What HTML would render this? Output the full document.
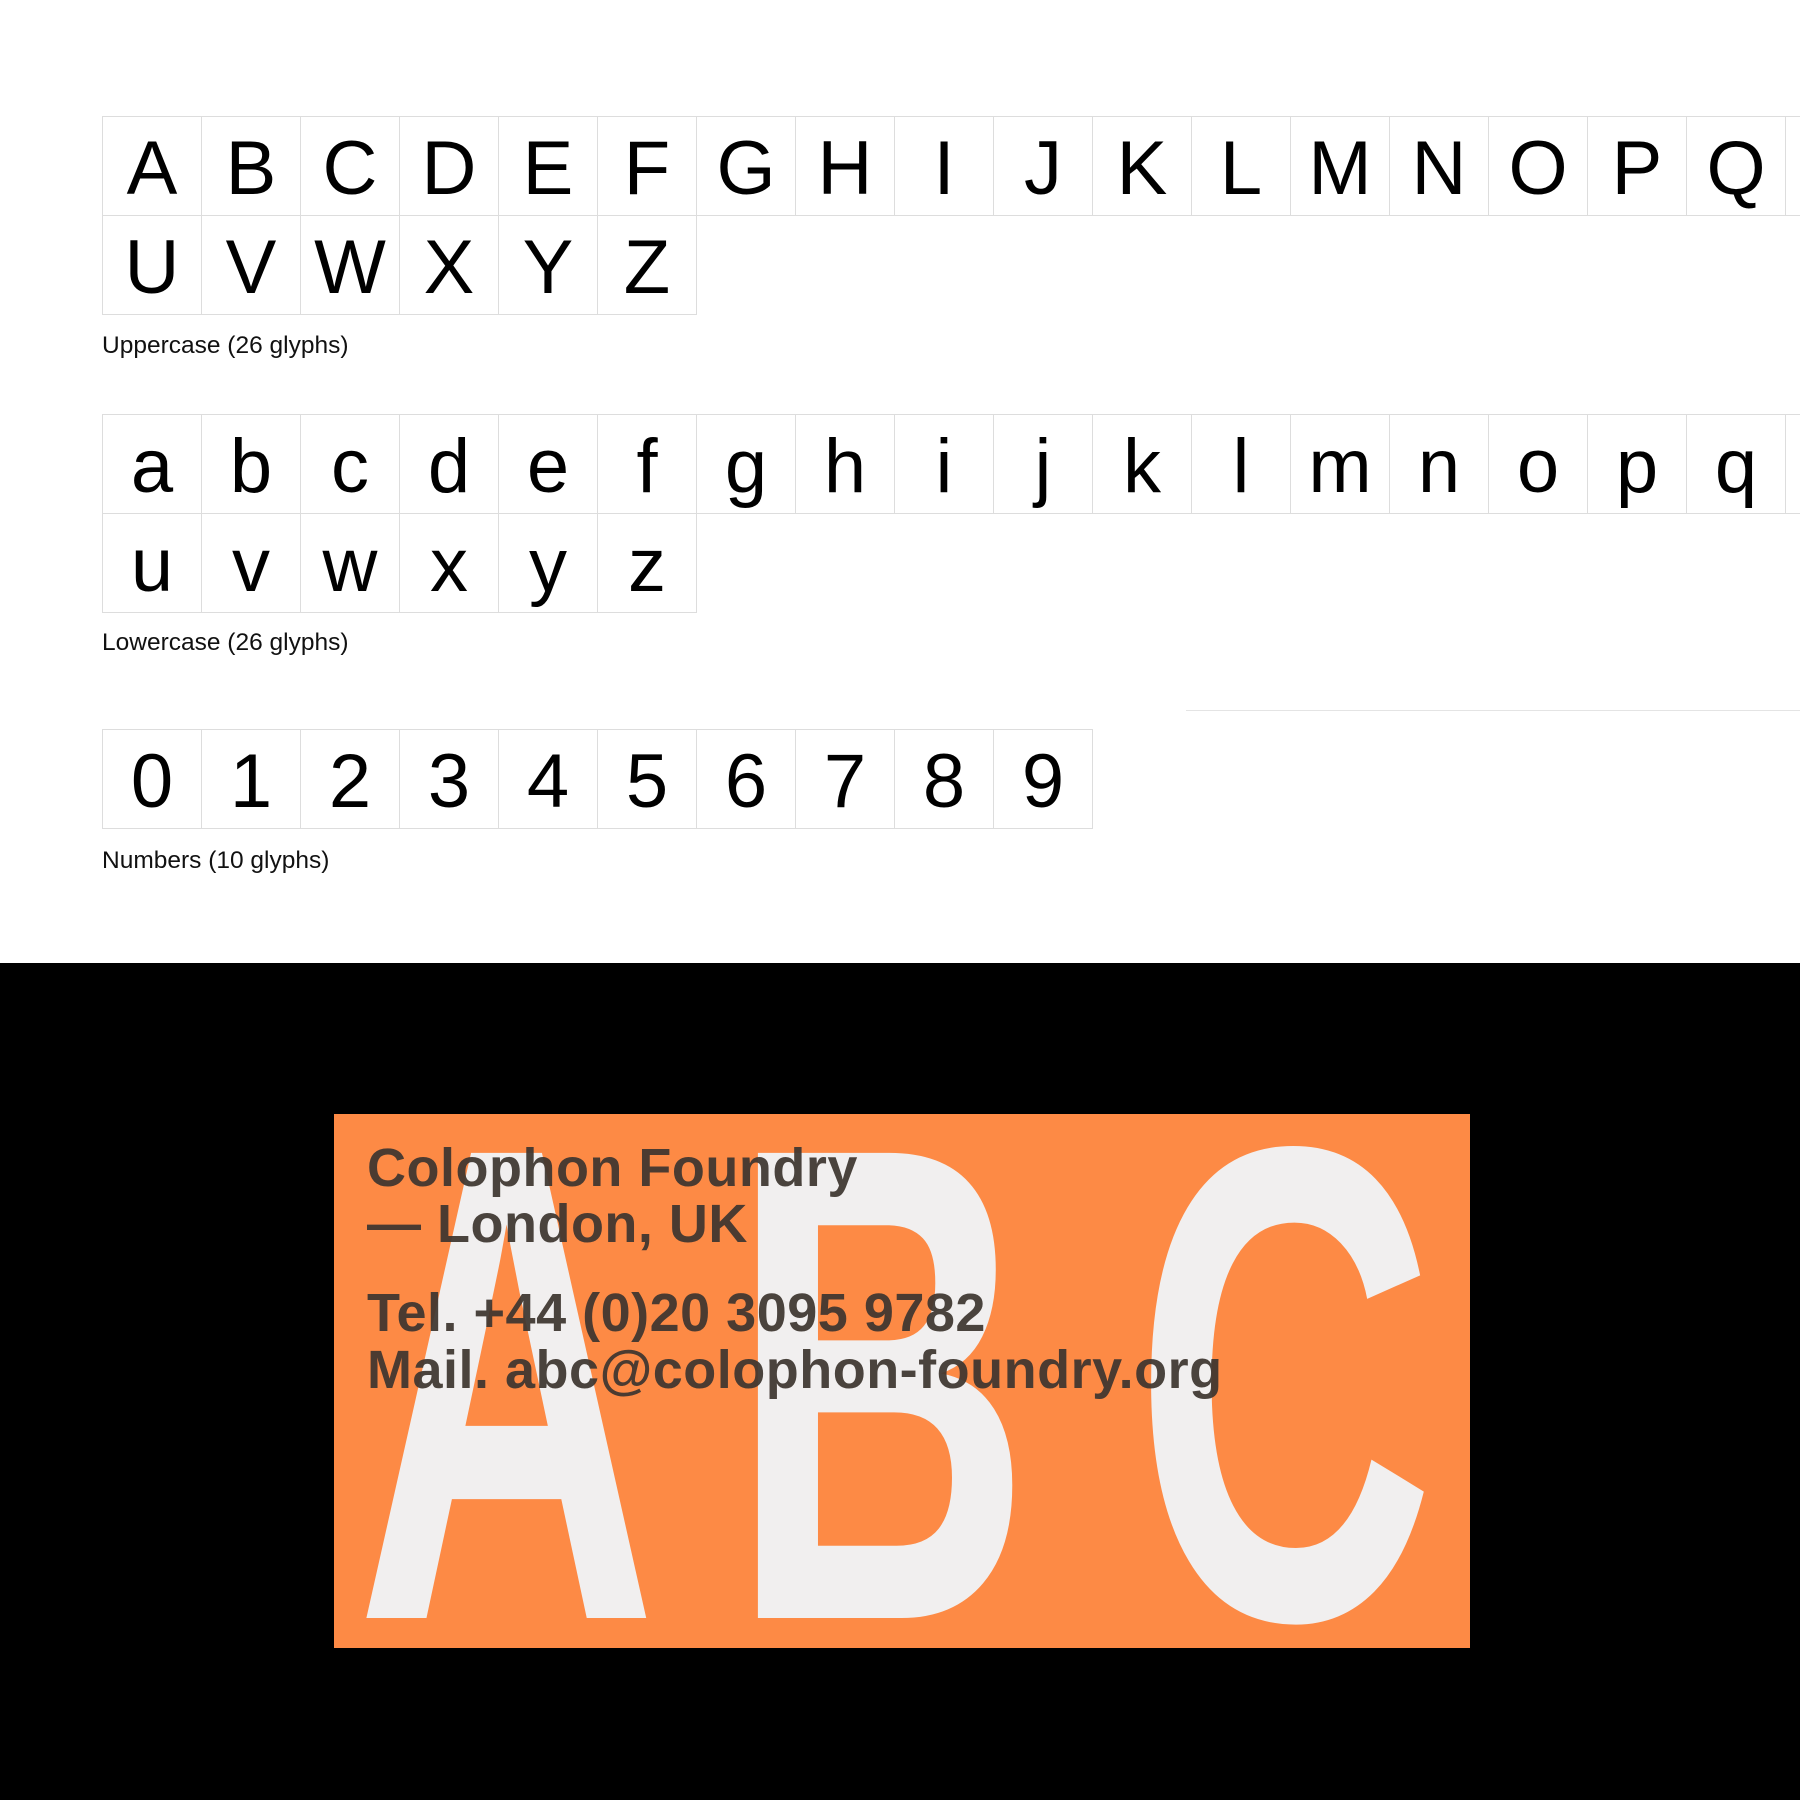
<!DOCTYPE html>
<html><head><meta charset="utf-8"><style>
html,body{margin:0;width:1800px;height:1800px;overflow:hidden}
body{background:#fff;position:relative;font-family:"Liberation Sans",sans-serif}
.wrap{position:absolute;left:0;top:0;width:1800px;height:1800px;overflow:hidden}
.grid{position:absolute;left:102px;display:grid;grid-template-columns:repeat(18,99px);grid-auto-rows:99px;border-left:1px solid #ddd;border-top:1px solid #ddd}
.grid div{border-right:1px solid #ddd;border-bottom:1px solid #ddd;display:flex;align-items:center;justify-content:center;font-size:76px;color:#000;padding-top:4px;box-sizing:border-box}
.grid.n{grid-template-columns:repeat(10,99px)}
.cap{position:absolute;left:102px;font-size:24.5px;color:#111}
.blk{position:absolute;left:0;top:963px;width:1800px;height:837px;background:#000}
.card{position:absolute;left:334px;top:1114px;width:1136px;height:534px;background:#fd8a45;overflow:hidden}
.big{position:absolute;top:-67px;font-weight:bold;font-size:676px;color:#f1efef;transform:scaleX(0.617);transform-origin:left top;line-height:1}
.t{position:absolute;left:33px;font-weight:bold;font-size:54px;color:#3e3630;letter-spacing:0.5px;line-height:1;opacity:.93}
</style></head><body><div class="wrap">
<div class="grid" style="top:116px">
<div>A</div><div>B</div><div>C</div><div>D</div><div>E</div><div>F</div><div>G</div><div>H</div><div>I</div><div>J</div><div>K</div><div>L</div><div>M</div><div>N</div><div>O</div><div>P</div><div>Q</div><div>R</div>
<div>U</div><div>V</div><div>W</div><div>X</div><div>Y</div><div>Z</div></div>
<div class="cap" style="top:332px">Uppercase (26 glyphs)</div>
<div class="grid" style="top:414px">
<div>a</div><div>b</div><div>c</div><div>d</div><div>e</div><div>f</div><div>g</div><div>h</div><div>i</div><div>j</div><div>k</div><div>l</div><div>m</div><div>n</div><div>o</div><div>p</div><div>q</div><div>r</div>
<div>u</div><div>v</div><div>w</div><div>x</div><div>y</div><div>z</div></div>
<div class="cap" style="top:629px">Lowercase (26 glyphs)</div>
<div style="position:absolute;left:1186px;top:710px;width:614px;height:1px;background:#e4e4e4"></div>
<div class="grid n" style="top:729px">
<div>0</div><div>1</div><div>2</div><div>3</div><div>4</div><div>5</div><div>6</div><div>7</div><div>8</div><div>9</div></div>
<div class="cap" style="top:847px">Numbers (10 glyphs)</div>
<div class="blk"></div>
<div class="card">
<div class="big" style="left:22px">A</div>
<div class="big" style="left:396px">B</div>
<div class="big" style="left:800px">C</div>
<div class="t" style="top:27px">Colophon Foundry</div>
<div class="t" style="top:83px">— London, UK</div>
<div class="t" style="top:172px">Tel. +44 (0)20 3095 9782</div>
<div class="t" style="top:229px">Mail. abc@colophon-foundry.org</div>
</div>
</div></body></html>
